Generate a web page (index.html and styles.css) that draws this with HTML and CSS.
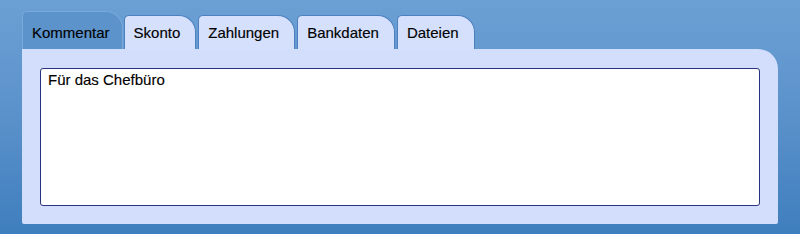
FILE: index.html
```html
<!DOCTYPE html>
<html lang="de">
<head>
<meta charset="utf-8">
<title>Kommentar</title>
<link rel="stylesheet" href="styles.css">
</head>
<body>
<div class="window">
  <div class="tabs">
    <div class="tab active">Kommentar</div>
    <div class="tab">Skonto</div>
    <div class="tab">Zahlungen</div>
    <div class="tab">Bankdaten</div>
    <div class="tab">Dateien</div>
  </div>
  <div class="panel">
    <div class="textbox">Für das Chefbüro</div>
  </div>
</div>
</body>
</html>
```

FILE: styles.css
```css
html, body {
  margin: 0;
  padding: 0;
}
body {
  width: 800px;
  height: 234px;
  overflow: hidden;
  font-family: "Liberation Sans", Arial, sans-serif;
  font-size: 15px;
  color: #000;
  -webkit-text-stroke: 0.15px #000;
}
.window {
  box-sizing: border-box;
  height: 234px;
  padding: 11px 22px 0 22px;
  background: linear-gradient(to bottom, #6ba0d4 0%, #5d93cc 45%, #3f7ebe 100%);
}
.tabs {
  display: flex;
  align-items: flex-end;
  gap: 2px;
  height: 38px;
}
.tab {
  box-sizing: border-box;
  height: 34px;
  padding: 0 15px 8px 9px;
  display: flex;
  align-items: flex-end;
  line-height: 17px;
  background: #d5e0fd;
  border: 1px solid #4c80c0;
  border-bottom: none;
  border-radius: 5px 17px 0 0;
  white-space: nowrap;
}
.tab.active {
  height: 38px;
  padding: 0 12px 8px 9px;
  margin-right: -1px;
  background: #5c93cb;
  border-color: #79a9da;
}
.panel {
  box-sizing: border-box;
  height: 175px;
  padding: 19px 18px 18px 18px;
  background: #d3defc;
  border-radius: 0 20px 2px 2px;
  display: flex;
}
.textbox {
  flex: 1;
  box-sizing: border-box;
  background: #fff;
  border: 1px solid #28347e;
  border-radius: 3px;
  padding: 2px 7px;
  line-height: 17px;
}
```
